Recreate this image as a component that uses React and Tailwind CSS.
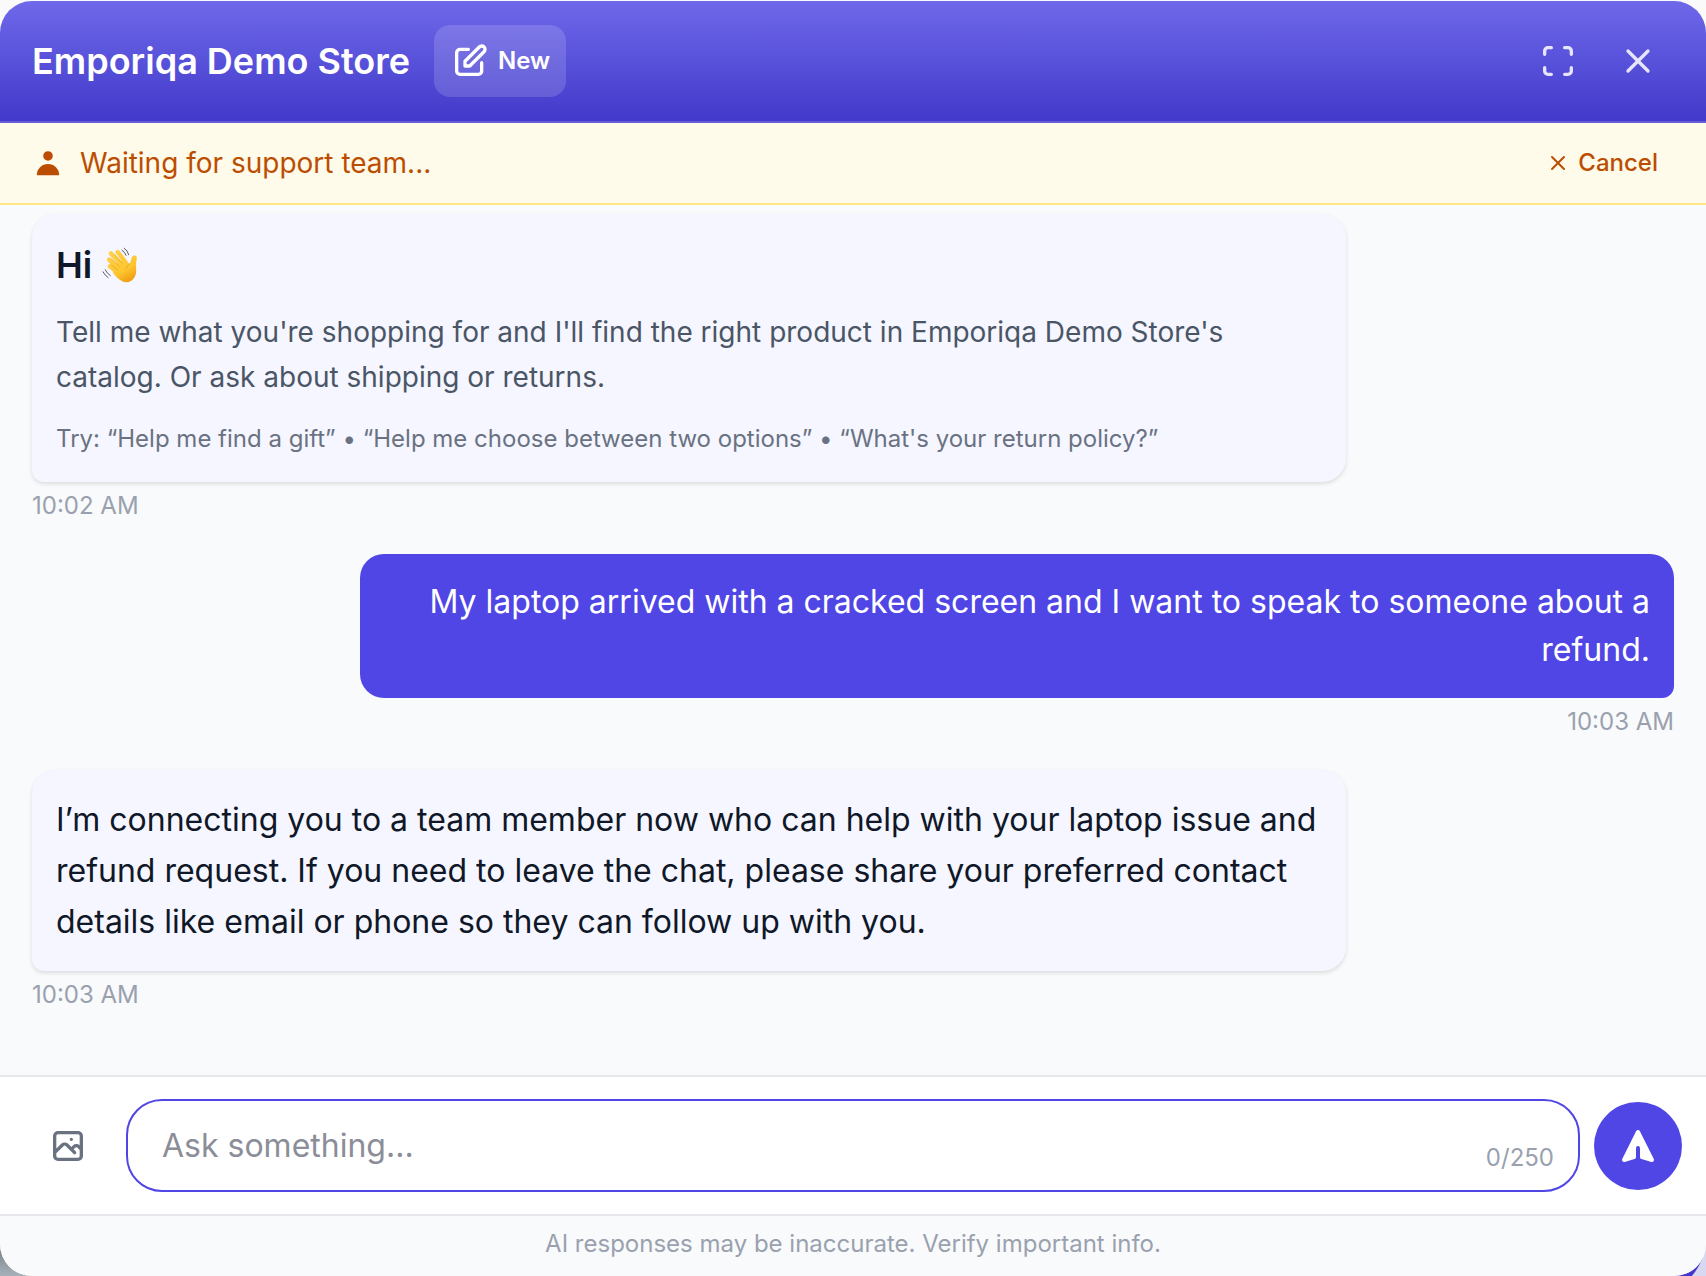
import React, { useState } from "react";

const messages = [
  {
    id: 1,
    from: "user",
    time: "10:03 AM",
    text: "My laptop arrived with a cracked screen and I want to speak to someone about a refund.",
  },
  {
    id: 2,
    from: "bot",
    time: "10:03 AM",
    text: "I’m connecting you to a team member now who can help with your laptop issue and refund request. If you need to leave the chat, please share your preferred contact details like email or phone so they can follow up with you.",
  },
];

const MAX_LENGTH = 250;

// Outline icon on a 24px grid
function StrokeIcon({ d, className }) {
  return (
    <svg
      viewBox="0 0 24 24"
      fill="none"
      stroke="currentColor"
      strokeWidth={2}
      strokeLinecap="round"
      strokeLinejoin="round"
      className={className}
      aria-hidden="true"
    >
      <path d={d} />
    </svg>
  );
}

function WavingHand() {
  return (
    <svg viewBox="32 42 112 112" className="size-9" role="img" aria-label="waving hand">
      <defs>
        <linearGradient id="skin" gradientUnits="userSpaceOnUse" x1="60" y1="55" x2="115" y2="152">
          <stop offset="0" stopColor="#ffd24a" />
          <stop offset="0.65" stopColor="#fdc52f" />
          <stop offset="1" stopColor="#ee9a10" />
        </linearGradient>
      </defs>
      <g fill="none" stroke="url(#skin)" strokeLinecap="round" strokeLinejoin="round">
        <path d="M81 58L104 88" strokeWidth="14" />
        <path d="M60 62L92 97" strokeWidth="14" />
        <path d="M54 81L84 110" strokeWidth="14" />
        <path d="M56 102L84 124" strokeWidth="13" />
      </g>
      <path
        d="M80 88L104 82L117 94C122 91 121 82 125 74C128 67 139 67 140 74C141 82 138 88 138 97C138 112 141 126 131 139C123 150 108 155 96 149C84 143 74 134 66 122Z"
        fill="url(#skin)"
      />
      <g fill="none" stroke="#e59a12" strokeWidth="2" strokeLinecap="round">
        <path d="M72 66L94 92" />
        <path d="M62 80L86 103" />
        <path d="M60 97L80 113" />
        <path d="M117 94C112 99 108 104 107 110" />
      </g>
      <g fill="none" stroke="#55565c" strokeWidth="3" strokeLinecap="round">
        <path d="M101 46Q112 52 115 66" />
        <path d="M94 52Q103 57 107 68" />
        <path d="M42 113Q47 124 58 131" />
        <path d="M35 119Q40 130 51 137" />
      </g>
    </svg>
  );
}

function Message({ from, time, children }) {
  const isUser = from === "user";
  return (
    <div className={`flex flex-col ${isUser ? "items-end" : "items-start"}`}>
      <div
        className={
          isUser
            ? "w-4/5 rounded-3xl rounded-br-xl bg-[#4f46e5] p-6 text-right text-[32px] leading-[48px] text-white"
            : "w-4/5 rounded-3xl rounded-bl-xl bg-[#f5f6ff] p-6 text-[32px] leading-[51px] text-gray-900 shadow-[0_2px_4px_rgba(0,0,0,0.12)]"
        }
      >
        {children}
      </div>
      <time className="mt-2 text-2xl leading-8 text-gray-400">{time}</time>
    </div>
  );
}

export default function App() {
  const [text, setText] = useState("");

  return (
    <div className="relative flex h-screen flex-col overflow-hidden bg-[#fafafa] pt-px font-['Inter',sans-serif]">
      {/* page and launcher button peeking out behind the window */}
      <div className="absolute bottom-0 left-0 size-8 bg-linear-to-b from-[#737d84] to-[#a7b1b9]" />
      <div className="absolute right-0 bottom-0 size-16 overflow-hidden bg-[#d9d8f3]">
        <div className="absolute right-0 -bottom-5 size-29 rounded-full bg-[#4338ca]" />
      </div>

      <div className="relative flex min-h-0 flex-1 flex-col overflow-hidden rounded-[32px] bg-gray-50">
        <header className="flex items-center justify-between border-b-2 border-[#685dd8] bg-linear-to-b from-[#6f68ea] to-[#4338ca] px-8 py-6">
          <div className="flex items-center gap-6">
            <h1 className="text-4xl font-semibold text-white">Emporiqa Demo Store</h1>
            <button className="flex items-center gap-2 rounded-2xl bg-white/15 p-4 text-2xl font-semibold text-white">
              <StrokeIcon
                className="size-10"
                d="M11 5H6a2 2 0 00-2 2v11a2 2 0 002 2h11a2 2 0 002-2v-5m-1.414-9.414a2 2 0 112.828 2.828L11.828 15H9v-2.828l8.586-8.586z"
              />
              New
            </button>
          </div>
          <div className="flex items-center gap-2 text-white/85">
            <button aria-label="Full screen" className="flex size-18 items-center justify-center">
              <StrokeIcon
                className="size-10"
                d="M4 8V6a2 2 0 012-2h2M4 16v2a2 2 0 002 2h2m8-16h2a2 2 0 012 2v2m-4 12h2a2 2 0 002-2v-2"
              />
            </button>
            <button aria-label="Close chat" className="flex size-18 items-center justify-center">
              <StrokeIcon className="size-10" d="M6 18L18 6M6 6l12 12" />
            </button>
          </div>
        </header>

        <div className="flex h-[82px] shrink-0 items-center justify-between border-b-2 border-amber-200 bg-amber-50 px-8 text-amber-700">
          <div className="flex items-center gap-4 text-[28px]">
            <svg viewBox="0 0 20 20" fill="currentColor" className="size-8" aria-hidden="true">
              <path d="M10 8.6a3 3 0 100-6 3 3 0 000 6zm-7 9a7 7 0 1114 0H3z" />
            </svg>
            <span>Waiting for support team...</span>
          </div>
          <button className="flex items-center gap-2 px-4 text-2xl font-medium">
            <StrokeIcon className="size-6" d="M6 18L18 6M6 6l12 12" />
            Cancel
          </button>
        </div>

        {/* --- Conversation, pinned to the newest message --- */}
        <main className="flex min-h-0 flex-1 flex-col justify-end gap-8 overflow-hidden px-8 pb-16">
          <Message from="bot" time="10:02 AM">
            <h2 className="flex items-center gap-[10px] text-4xl leading-[54px] font-semibold">
              Hi <WavingHand />
            </h2>
            <p className="mt-[18px] text-[28px] leading-[45px] text-gray-600">
              Tell me what you're shopping for and I'll find the right product in Emporiqa Demo
              Store's catalog. Or ask about shipping or returns.
            </p>
            <p className="mt-5 text-2xl leading-[38px] text-gray-500">
              Try: “Help me find a gift” • “Help me choose between two options” • “What's your
              return policy?”
            </p>
          </Message>
          {messages.map((m) => (
            <Message key={m.id} from={m.from} time={m.time}>
              {m.text}
            </Message>
          ))}
        </main>

        <form
          onSubmit={(e) => e.preventDefault()}
          className="flex items-center gap-[14px] border-t-2 border-gray-200 bg-white px-6 py-[22px]"
        >
          <button
            type="button"
            aria-label="Attach image"
            className="flex size-22 items-center justify-center text-gray-500"
          >
            <StrokeIcon
              className="size-10"
              d="M4 16l4.586-4.586a2 2 0 012.828 0L16 16m-2-2l1.586-1.586a2 2 0 012.828 0L20 14m-6-6h.01M6 20h12a2 2 0 002-2V6a2 2 0 00-2-2H6a2 2 0 00-2 2v12a2 2 0 002 2z"
            />
          </button>
          <div className="relative flex-1">
            <input
              type="text"
              aria-label="Message"
              placeholder="Ask something..."
              maxLength={MAX_LENGTH}
              value={text}
              onChange={(e) => setText(e.target.value)}
              className="block h-[93px] w-full rounded-[36px] border-2 border-[#4f46e5] bg-white pr-36 pl-[34px] text-[32px] text-gray-900 outline-none placeholder:text-[#8b8d98]"
            />
            <span className="absolute right-[26px] bottom-[18px] text-2xl leading-8 text-gray-400">
              {text.length}/{MAX_LENGTH}
            </span>
          </div>
          <button
            aria-label="Send"
            className="flex size-22 items-center justify-center rounded-full bg-[#4f46e5] text-white"
          >
            <svg viewBox="0 0 20 20" fill="currentColor" className="size-10" aria-hidden="true">
              <path d="M10.894 2.553a1 1 0 00-1.788 0l-7 14a1 1 0 001.169 1.409l5-1.429A1 1 0 009 15.571V11a1 1 0 112 0v4.571a1 1 0 00.725.962l5 1.428a1 1 0 001.17-1.408l-7-14z" />
            </svg>
          </button>
        </form>

        <footer className="border-t-2 border-gray-200 bg-gray-50 pt-3 pb-4 text-center text-2xl leading-8 text-gray-400">
          AI responses may be inaccurate. Verify important info.
        </footer>
      </div>
    </div>
  );
}
